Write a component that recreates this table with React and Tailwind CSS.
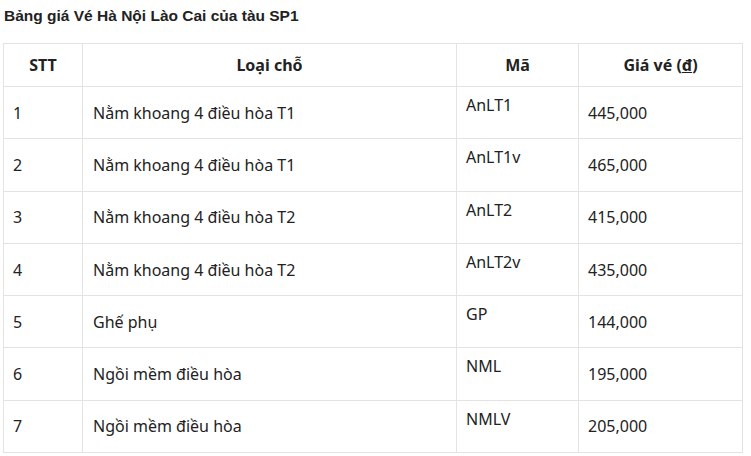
const rows = [
  ["1", "Nằm khoang 4 điều hòa T1", "AnLT1", "445,000"],
  ["2", "Nằm khoang 4 điều hòa T1", "AnLT1v", "465,000"],
  ["3", "Nằm khoang 4 điều hòa T2", "AnLT2", "415,000"],
  ["4", "Nằm khoang 4 điều hòa T2", "AnLT2v", "435,000"],
  ["5", "Ghế phụ", "GP", "144,000"],
  ["6", "Ngồi mềm điều hòa", "NML", "195,000"],
  ["7", "Ngồi mềm điều hòa", "NMLV", "205,000"],
];

export default function App() {
  return (
    <div className="w-[751px] h-[456px] overflow-hidden bg-white px-[3px] pt-[7px]">
      <h3 className="font-['Liberation_Sans',Arial,sans-serif] font-bold text-[15.5px] leading-[18px] text-[#222] pl-[1px]">
        Bảng giá Vé Hà Nội Lào Cai của tàu SP1
      </h3>

      <table className="mt-[18px] w-[740px] border-collapse table-fixed font-['Noto_Sans',sans-serif] text-[16px] text-[#222]">
        <colgroup>
          <col className="w-[79px]" />
          <col className="w-[374px]" />
          <col className="w-[122px]" />
          <col className="w-[164px]" />
        </colgroup>
        <thead>
          <tr className="h-[43px]">
            <th className="border border-[#e3e3e3] font-bold">STT</th>
            <th className="border border-[#e3e3e3] font-bold">Loại chỗ</th>
            <th className="border border-[#e3e3e3] font-bold">Mã</th>
            <th className="border border-[#e3e3e3] font-bold">
              Giá vé (<span className="underline">đ</span>)
            </th>
          </tr>
        </thead>
        <tbody>
          {rows.map((r) => (
            <tr key={r[0]} className="h-[52.3px]">
              <td className="border border-[#e3e3e3] px-[9px] align-middle">{r[0]}</td>
              <td className="border border-[#e3e3e3] px-[10px] align-middle">{r[1]}</td>
              <td className="border border-[#e3e3e3] px-[9px] pt-[6px] align-top">{r[2]}</td>
              <td className="border border-[#e3e3e3] px-[9px] align-middle">{r[3]}</td>
            </tr>
          ))}
        </tbody>
      </table>
    </div>
  );
}
